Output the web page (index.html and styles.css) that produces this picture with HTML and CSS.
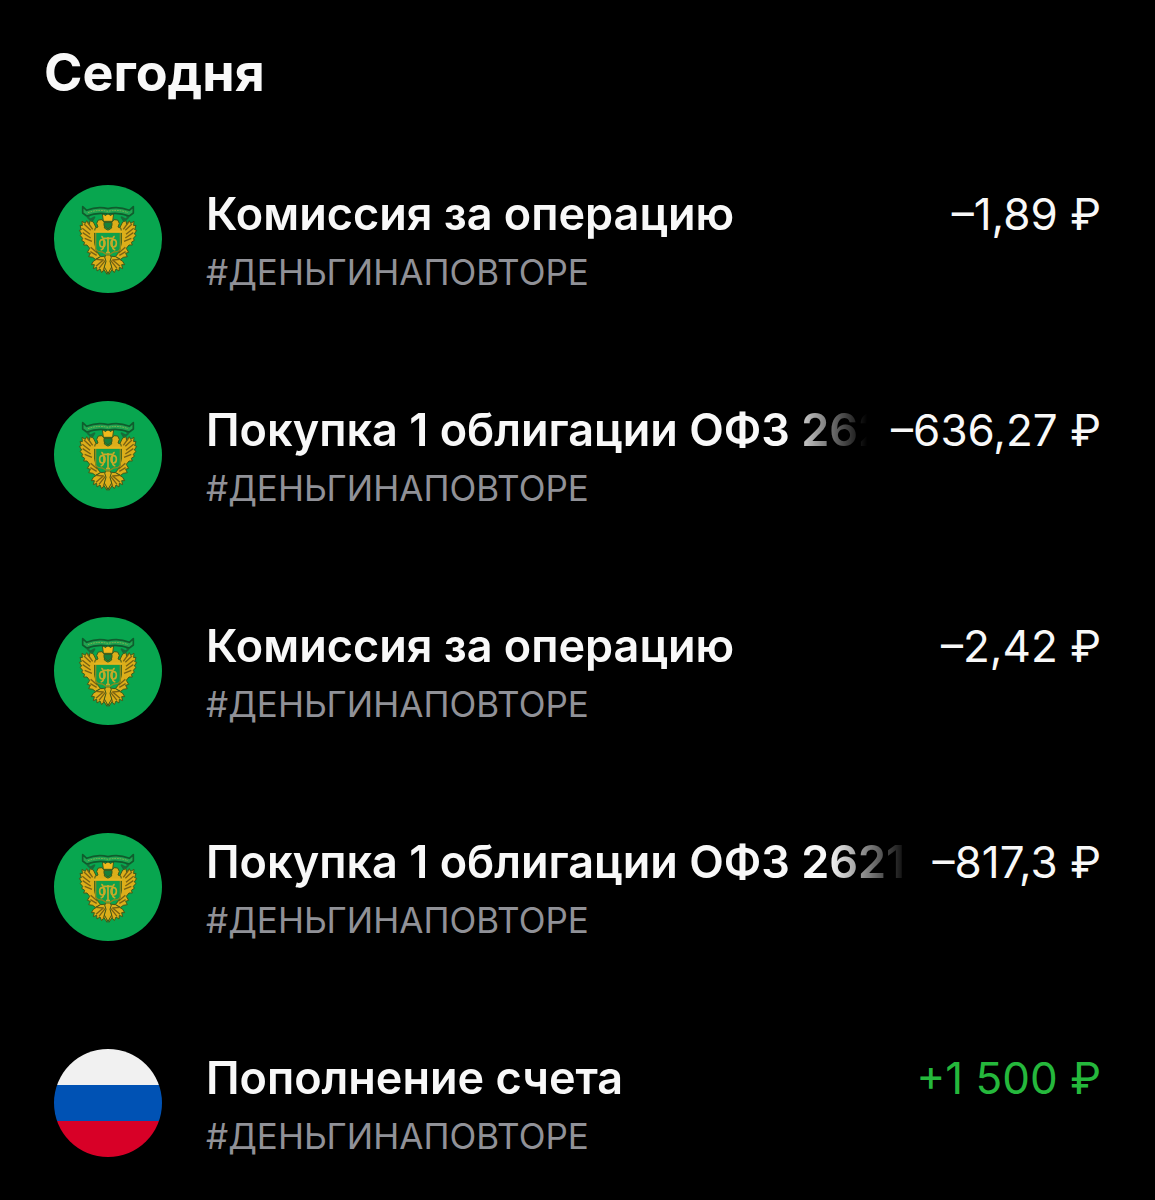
FILE: index.html
```html
<!DOCTYPE html>
<html lang="ru">
<head>
<meta charset="utf-8">
<meta name="viewport" content="width=device-width, initial-scale=1">
<title>Операции</title>
<link rel="stylesheet" href="styles.css">
</head>
<body>
<svg class="defs" width="0" height="0" aria-hidden="true">
  <symbol id="emblem" viewBox="18 15 324 324">
    <circle cx="180" cy="177" r="162" fill="#08a64f"/>
    <g stroke="#3f5a1a" stroke-width="3" fill="#dcae1a" stroke-linejoin="round">
      <g id="half">
        <path d="M148 150 L136 126 L126 122 L124 134 L116 122 L112 130 L102 124 L103 137 L96 136 L100 149 L94 151 L101 162 L96 166 L104 175 L101 181 L110 187 L107 195 L117 195 L125 205 L118 217 L127 220 L122 230 L134 232 L142 238 L158 230 L146 215 L140 190 L140 158 Z"/>
        <path d="M150 141 L146 130 L151 120 L162 119 L170 128 L169 144 L180 151 L180 158 L140 158 L141 145 Z"/>
        <path d="M177 228 L157 230 L136 244 L130 254 L139 254 L136 266 L146 262 L147 273 L156 267 L161 278 L168 269 L177 283 Z"/>
        <path d="M108 132 L128 151 M103 145 L126 163 M104 158 L128 174 M110 175 L132 184 M118 126 L134 148 M128 202 L148 219 M127 215 L146 226 M144 238 L166 240 L144 259 M153 265 L172 241 M166 270 L176 244" fill="none" stroke="#7a6212" stroke-width="4"/>
        <path d="M126 104 L119 112 L127 119 L139 112 L132 123" fill="none" stroke="#176c38" stroke-width="6"/>
      </g>
      <use href="#half" transform="matrix(-1 0 0 1 360 0)"/>
      <path d="M180 219 L190 231 L186 244 L191 261 L180 280 L169 261 L174 244 L170 231 Z"/>
      <path d="M143 155 H217 V206 Q214 216 197 216 L180 226 L163 216 Q146 216 143 206 Z" fill="#0fa04a" stroke="#8f8a1c" stroke-width="4"/>
      <path d="M138 155 H222" stroke="#e5b51d" stroke-width="7"/>
      <path d="M166 124 L163 100 L173 107 L180 96 L187 107 L197 100 L194 124 Z" fill="#f0b91c"/>
      <path d="M168 127 H192 V137 L180 147 L168 137 Z" fill="#17813b"/>
    </g>
    <g fill="none" stroke="#c6aa28" stroke-width="5">
      <path d="M160 169 Q168 173 168 191 Q168 207 158 210 M200 169 Q192 173 192 191 Q192 207 202 210 M168 175 H192 M180 171 V218 M174 218 H186"/>
      <ellipse cx="163" cy="190" rx="8" ry="11"/>
      <ellipse cx="197" cy="190" rx="8" ry="11"/>
    </g>
    <path d="M104 80 L116 91 Q148 78 180 86 Q212 78 244 91 L256 80 V99 L244 108 Q212 96 180 102 Q148 96 116 108 L104 99 Z" fill="#1fa350" stroke="#0f5c2d" stroke-width="5" stroke-linejoin="round"/>
    <path d="M120 98 Q149 87 180 94 Q211 87 240 98" fill="none" stroke="#86b54e" stroke-width="3" stroke-dasharray="5 3"/>
  </symbol>
</svg>

<main class="history">
  <h1 class="day">Сегодня</h1>
  <ul class="operations">
    <li class="operation">
      <svg class="icon" aria-hidden="true"><use href="#emblem"/></svg>
      <div class="details">
        <div class="line"><span class="title">Комиссия за операцию</span><span class="amount">–1,89 ₽</span></div>
        <div class="tag">#ДЕНЬГИНАПОВТОРЕ</div>
      </div>
    </li>
    <li class="operation">
      <svg class="icon" aria-hidden="true"><use href="#emblem"/></svg>
      <div class="details">
        <div class="line"><span class="title">Покупка 1 облигации ОФЗ 2621</span><span class="amount">–636,27 ₽</span></div>
        <div class="tag">#ДЕНЬГИНАПОВТОРЕ</div>
      </div>
    </li>
    <li class="operation">
      <svg class="icon" aria-hidden="true"><use href="#emblem"/></svg>
      <div class="details">
        <div class="line"><span class="title">Комиссия за операцию</span><span class="amount">–2,42 ₽</span></div>
        <div class="tag">#ДЕНЬГИНАПОВТОРЕ</div>
      </div>
    </li>
    <li class="operation">
      <svg class="icon" aria-hidden="true"><use href="#emblem"/></svg>
      <div class="details">
        <div class="line"><span class="title">Покупка 1 облигации ОФЗ 2621</span><span class="amount">–817,3 ₽</span></div>
        <div class="tag">#ДЕНЬГИНАПОВТОРЕ</div>
      </div>
    </li>
    <li class="operation">
      <span class="icon flag"></span>
      <div class="details">
        <div class="line"><span class="title">Пополнение счета</span><span class="amount income">+1 500 ₽</span></div>
        <div class="tag">#ДЕНЬГИНАПОВТОРЕ</div>
      </div>
    </li>
  </ul>
</main>
</body>
</html>
```
FILE: styles.css
```css
* {
  box-sizing: border-box;
}

body {
  margin: 0;
  background: #000;
  color: #f8f8f8;
  font-family: Inter, "Liberation Sans", sans-serif;
}

.defs {
  display: block;
}

.history {
  padding: 40px 54px 43px;
}

.day {
  margin: 0 0 80px -10px;
  font-size: 52px;
  line-height: 65px;
  font-weight: 700;
}

.operations {
  display: flex;
  flex-direction: column;
  gap: 108px;
  margin: 0;
  padding: 0;
  list-style: none;
}

.operation {
  display: flex;
  align-items: center;
  gap: 44px;
}

.icon {
  flex: none;
  width: 108px;
  height: 108px;
}

.flag {
  border-radius: 50%;
  background: linear-gradient(#f1f1f1 0 33%, #0052b4 33% 67%, #d80027 67%);
}

.details {
  flex: 1;
  min-width: 0;
}

.line {
  display: flex;
  gap: 24px;
  font-size: 45px;
  line-height: 58px;
  white-space: nowrap;
}

.title {
  flex: 1;
  min-width: 0;
  overflow: hidden;
  font-weight: 600;
  -webkit-mask-image: linear-gradient(to left, transparent, #000 80px);
  mask-image: linear-gradient(to left, transparent, #000 80px);
}

.amount {
  font-size: 44px;
  font-weight: 400;
}

.income {
  color: #25b83c;
}

.tag {
  margin-top: 8px;
  color: #909197;
  font-size: 35px;
  line-height: 42px;
}
```
